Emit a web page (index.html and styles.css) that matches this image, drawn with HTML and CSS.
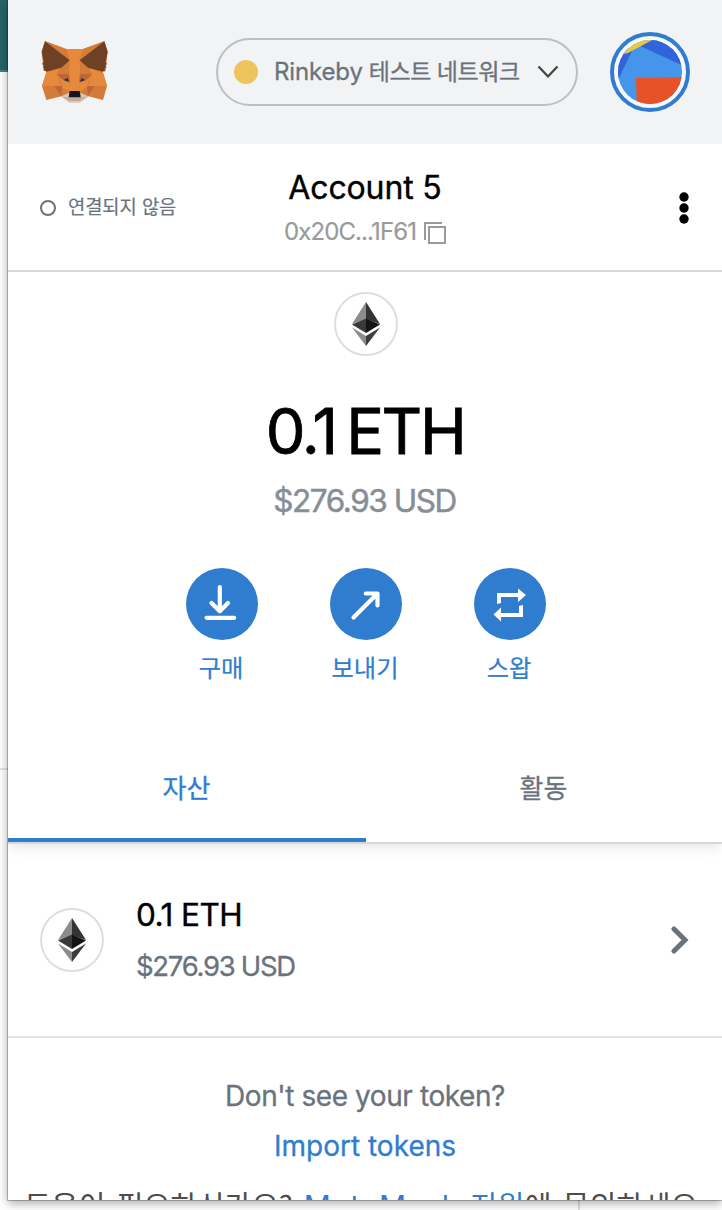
FILE: index.html
```html
<!DOCTYPE html>
<html lang="ko">
<head>
<meta charset="utf-8">
<title>MetaMask</title>
<link rel="stylesheet" href="styles.css">
</head>
<body>
<div class="page-strip"></div>
<div class="page-rule"></div>
<div class="page-divider"></div>
<main class="popup">
  <header class="header">
    <svg class="fox" viewBox="123 123 201 186">
      <path fill="#d37b38" d="M135 123L200 147H248L313 123L323 155L316 215L308 214L321 258L309 300L265 289L239 307H208L184 289L139 300L126 258L140 214L131 212L125 155Z"/>
      <path fill="#e6893d" d="M198 147H250L239 181L241 216L238 275H209L207 216L209 181Z"/>
      <path fill="#e6893d" d="M140 214L181 204L171 222L183 258H126ZM308 214L267 204L276 222L264 258H321Z"/>
      <path fill="#e6893d" d="M171 222L183 246L186 262L209 275L209 250ZM276 222L265 246L262 262L238 275L239 250Z"/>
      <path fill="#d37b38" d="M207 180V222H171L183 204ZM240 180V222H276L265 204Z"/>
      <path fill="#bd6536" d="M172 223H207L211 247L183 236ZM275 223H240L237 247L264 236Z"/>
      <path fill="#bd6536" d="M163 259H186L183 288ZM284 259H261L264 288Z"/>
      <path fill="#6f4124" d="M135 124L209 181L184 203L140 215L130 209L134 206L128 201L133 197L126 192L131 186L125 155ZM313 124L239 181L264 203L308 215L317 209L313 206L320 201L315 197L321 192L317 186L323 155Z"/>
      <path fill="#d8c9be" d="M184 289L207 278V292H241V278L264 289L239 307H208Z"/>
      <path fill="#c1ad9c" d="M188 290L207 292H241L260 290L239 303H208Z"/>
      <path fill="#161616" d="M209 273H239L242 292H206Z"/>
      <path fill="#263745" d="M190 240L203 234L207 246ZM257 240L244 234L240 246Z"/>
    </svg>
    <div class="network">
      <span class="network-dot"></span>
      <span class="network-name">Rinkeby</span>
      <span class="network-kind">테스트 네트워크</span>
      <svg class="caret" viewBox="0 0 22 14"><path d="M1.5 1.5L11 11.5L20.5 1.5"/></svg>
    </div>
    <svg class="avatar" viewBox="0 0 80 80">
      <defs><clipPath id="face"><circle cx="40" cy="40" r="32"/></clipPath></defs>
      <circle cx="40" cy="40" r="38" fill="#f7f8fa" stroke="#307dcf" stroke-width="4"/>
      <g clip-path="url(#face)">
        <path fill="#4596ea" d="M0 0H80V80H0Z"/>
        <path fill="#3164da" d="M30 14L46 4H80V37ZM8 48L23 17L8 12Z"/>
        <path fill="#e8c945" d="M14 22L18 21L44 7L20 2Z"/>
        <path fill="#e75227" d="M26 46L80 45V80H27Z"/>
      </g>
    </svg>
  </header>

  <section class="account-bar">
    <div class="status"><span class="status-ring"></span><span>연결되지 않음</span></div>
    <div class="account">
      <div class="account-name">Account 5</div>
      <div class="account-address"><span>0x20C...1F61</span>
        <svg class="copy" viewBox="0 0 22 22"><path d="M1 18V1H18M5 5H21V21H5Z"/></svg>
      </div>
    </div>
    <svg class="dots" viewBox="0 0 10 32"><circle cx="5" cy="5" r="4.7"/><circle cx="5" cy="16" r="4.7"/><circle cx="5" cy="27" r="4.7"/></svg>
  </section>

  <section class="overview">
    <div class="token-icon">
      <svg viewBox="0 0 28 44"><path fill="#8c8c8c" d="M14 0V17L0 22Z"/><path fill="#343434" d="M14 0V17L28 22Z"/><path fill="#393939" d="M14 16.5V31L0 22.5Z"/><path fill="#141414" d="M14 16.5V31L28 22.5Z"/><path fill="#8c8c8c" d="M0 25.5L14 34V44Z"/><path fill="#3c3c3b" d="M28 25.5L14 34V44Z"/></svg>
    </div>
    <div class="balance"><span class="balance-value">0.1</span><span class="balance-unit">ETH</span></div>
    <div class="balance-fiat">$276.93 USD</div>
    <div class="actions">
      <div class="action">
        <svg viewBox="0 0 72 72"><circle class="disc" cx="36" cy="36" r="36"/><path class="stroke" d="M33.8 19V43M25.5 35L33.8 43.3L42 35M20.6 49.8H48.2"/></svg>
        <span>구매</span>
      </div>
      <div class="action">
        <svg viewBox="0 0 72 72"><circle class="disc" cx="36" cy="36" r="36"/><path class="stroke" d="M23.5 49.5L47 26M35.8 25.5H47.5V37.5"/></svg>
        <span>보내기</span>
      </div>
      <div class="action">
        <svg viewBox="0 0 72 72"><circle class="disc" cx="36" cy="36" r="36"/><path fill="#fff" d="M23 36V25H44V20.5L52 27L44 34V29H27V35ZM49 37V49H27V53.5L19.5 46.5L27 39.5V45H45V38Z"/></svg>
        <span>스왑</span>
      </div>
    </div>
  </section>

  <nav class="tabs">
    <div class="tab tab-active">자산</div>
    <div class="tab">활동</div>
  </nav>

  <section class="asset">
    <div class="token-icon">
      <svg viewBox="0 0 28 44"><path fill="#8c8c8c" d="M14 0V17L0 22Z"/><path fill="#343434" d="M14 0V17L28 22Z"/><path fill="#393939" d="M14 16.5V31L0 22.5Z"/><path fill="#141414" d="M14 16.5V31L28 22.5Z"/><path fill="#8c8c8c" d="M0 25.5L14 34V44Z"/><path fill="#3c3c3b" d="M28 25.5L14 34V44Z"/></svg>
    </div>
    <div class="asset-text">
      <div class="asset-amount">0.1 ETH</div>
      <div class="asset-fiat">$276.93 USD</div>
    </div>
    <svg class="chevron" viewBox="0 0 18 28"><path d="M3 3L14 14L3 25"/></svg>
  </section>

  <section class="import">
    <div class="import-hint">Don't see your token?</div>
    <div class="import-link">Import tokens</div>
  </section>
  <footer class="support">도움이 필요하신가요? <span class="support-link"><span class="support-brand">MetaMask</span> 지원</span>에 문의하세요</footer>
</main>
</body>
</html>
```
FILE: styles.css
```css
* { box-sizing: border-box; }
body {
  margin: 0;
  position: relative;
  height: 1210px;
  overflow: hidden;
  background: #fff;
  font-family: Inter, "Noto Sans CJK KR", sans-serif;
  color: #000;
}
svg { display: block; flex: none; }

/* Web page visible behind the popup */
.page-strip { position: absolute; left: 0; top: 0; width: 8px; height: 72px; background: #27636a; border-bottom: 2px solid #4b7f86; }
.page-rule { position: absolute; left: 0; top: 768px; width: 8px; height: 2px; background: #e4e4e4; }
.page-divider { position: absolute; left: 578px; top: 1200px; width: 2px; height: 10px; background: #dedede; }

.popup {
  position: relative;
  width: 714px;
  height: 1200px;
  margin-left: 8px;
  overflow: hidden;
  background: #fff;
  box-shadow: 0 0 0 1px rgba(0, 0, 0, .24), 0 3px 10px rgba(0, 0, 0, .36);
}

.header { display: flex; align-items: center; height: 144px; padding: 0 32px 0 33px; background: #f2f3f4; }
.fox { width: 67px; height: 62px; margin-right: auto; }
.network {
  display: flex;
  align-items: center;
  width: 362px;
  height: 68px;
  margin-right: 32px;
  padding: 0 17px 0 16px;
  border: 2px solid #bbbec5;
  border-radius: 34px;
  color: #6a737d;
  white-space: nowrap;
}
.network-dot { width: 24px; height: 24px; margin-right: 16px; border-radius: 50%; background: #efc45f; }
.network-name { font-size: 24px; letter-spacing: -.15px; margin: -2px 6px 0 0; -webkit-text-stroke: .3px currentColor; }
.network-kind { font-family: "Noto Sans CJK KR", sans-serif; font-size: 23px; line-height: 32px; letter-spacing: -.45px; margin-top: -4px; -webkit-text-stroke: .3px currentColor; }
.caret { width: 22px; height: 14px; margin-left: auto; }
.caret path { fill: none; stroke: #414141; stroke-width: 2.2; }
.avatar { width: 80px; height: 80px; }

.account-bar {
  display: grid;
  grid-template-columns: 1fr auto 1fr;
  height: 128px;
  padding: 0 32px;
  border-bottom: 2px solid #d6d9dc;
}
.status { display: flex; align-items: center; gap: 12px; padding-top: 1px; font-size: 18.8px; line-height: 28px; color: #6a737d; white-space: nowrap; letter-spacing: -.1px; -webkit-text-stroke: .2px currentColor; }
.status-ring { width: 16px; height: 16px; margin-top: 1px; border: 2px solid #6a737d; border-radius: 50%; }
.account { padding-top: 24px; }
.account-name { font-size: 32px; line-height: 40px; letter-spacing: -.14px; text-align: center; -webkit-text-stroke: .4px currentColor; }
.account-address { display: flex; align-items: center; gap: 8px; margin-top: 8px; font-size: 24px; line-height: 32px; letter-spacing: -.9px; color: #989a9b; -webkit-text-stroke: .2px currentColor; }
.copy { width: 22px; height: 22px; margin-top: 2px; }
.copy path { fill: none; stroke: #989a9b; stroke-width: 2; }
.dots { width: 10px; height: 32px; align-self: center; justify-self: end; margin: 2px 1px 0 0; }

.overview { position: relative; z-index: 1; display: flex; flex-direction: column; align-items: center; height: 460px; padding-top: 20px; background: #fff; }
.token-icon { display: flex; align-items: center; justify-content: center; width: 64px; height: 64px; border: 2px solid #dedede; border-radius: 50%; flex: none; }
.token-icon svg { width: 28px; height: 44px; }
.overview .token-icon { margin-left: 2px; }
.balance { display: flex; gap: 10px; margin: 35px 0 0 0; font-size: 63px; line-height: 80px; -webkit-text-stroke: .8px currentColor; }
.balance-value { letter-spacing: -2px; }
.balance-unit { letter-spacing: -2.4px; }
.balance-fiat { margin: 10px 1px 0 0; font-size: 31.5px; line-height: 40px; letter-spacing: -1.45px; color: #868e97; -webkit-text-stroke: .5px currentColor; }
.actions { display: flex; gap: 72px; margin: 47px 0 0 2px; }
.action { display: flex; flex-direction: column; align-items: center; width: 72px; font-size: 24.3px; line-height: 32px; color: #307dcf; -webkit-text-stroke: .2px currentColor; }
.action svg { width: 72px; height: 72px; }
.action span { margin: 12px 2px 0 0; white-space: nowrap; }
.disc { fill: #307dcf; stroke: none; }
.stroke { fill: none; stroke: #fff; stroke-width: 4.2; stroke-linecap: round; stroke-linejoin: round; }

.tabs { display: grid; grid-template-columns: 358px 1fr; height: 112px; border-bottom: 2px solid #d8d8d8; box-shadow: 0 4px 12px rgba(0, 0, 0, .09); }
.tab { padding: 38px 1px 0 0; font-size: 26px; line-height: 38px; text-align: center; color: #6a737d; -webkit-text-stroke: .3px currentColor; }
.tab-active { color: #307dcf; border-bottom: 4px solid #307dcf; }

.asset { display: flex; align-items: center; height: 194px; padding: 0 33px 0 32px; border-bottom: 2px solid #e4e4e4; }
.asset-text { margin: 0 0 0 32px; }
.asset-amount { font-size: 31.5px; line-height: 40px; letter-spacing: -.5px; -webkit-text-stroke: .4px currentColor; }
.asset-fiat { margin-top: 11px; font-size: 27.5px; line-height: 40px; letter-spacing: -1.3px; color: #6a737d; -webkit-text-stroke: .3px currentColor; }
.chevron { width: 18px; height: 28px; margin-left: auto; }
.chevron path { fill: none; stroke: #6a737d; stroke-width: 5; stroke-linecap: round; }

.import { padding-top: 38px; font-size: 28px; line-height: 40px; text-align: center; -webkit-text-stroke: .3px currentColor; }
.import-hint { letter-spacing: -.42px; color: #6a737d; }
.import-link { margin-top: 10px; color: #307dcf; }

.support { margin-top: 18px; margin-left: -8px; font-family: "Noto Sans CJK KR", sans-serif; font-size: 29.4px; line-height: 40px; word-spacing: 2.8px; text-align: center; white-space: nowrap; color: #4d4d4d; }
.support-link { color: #307dcf; }
.support-brand { font-family: Inter, sans-serif; font-size: 30px; letter-spacing: 1px; }
```
